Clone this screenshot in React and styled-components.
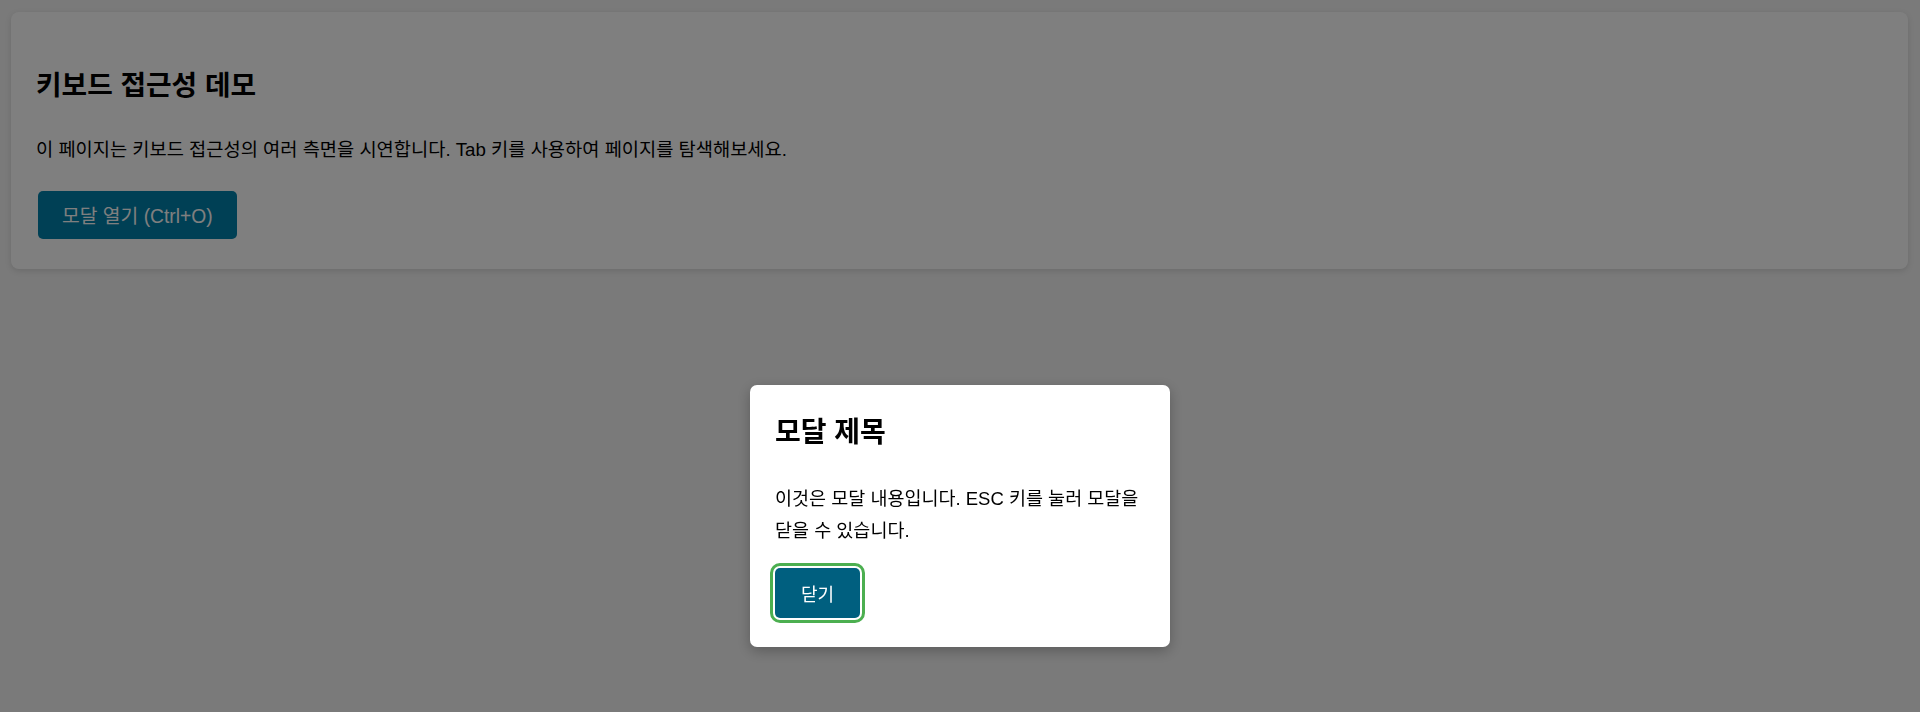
import React from 'react'
import styled, { createGlobalStyle } from 'styled-components'

const GlobalStyle = createGlobalStyle`
  html, body {
    margin: 0;
    padding: 0;
    background: #f4f4f4;
    font-family: "Liberation Sans", "Noto Sans CJK KR", sans-serif;
    color: #000;
    word-break: keep-all;
  }
`

const Page = styled.main`
  padding: 12px 12px 0 11px;
  min-height: 712px;
  box-sizing: border-box;
`

const Card = styled.section`
  background: #fff;
  border-radius: 8px;
  box-shadow: 0 2px 6px rgba(0, 0, 0, 0.12);
  padding: 24px 25px 30px;
`

const Title = styled.h1`
  font-size: 27.8px;
  line-height: 32px;
  font-weight: 700;
  margin: 34px 0 34px;
`

const Text = styled.p`
  font-size: 18.7px;
  line-height: 27px;
  margin: 0 0 28px;
`

const Button = styled.button`
  display: inline-block;
  height: ${p => (p.$small ? '50px' : '48px')};
  padding: 0 ${p => (p.$small ? '26px' : '24px')};
  margin-left: ${p => (p.$small ? '0' : '2px')};
  font-family: inherit;
  font-size: ${p => (p.$small ? '18px' : '19.3px')};
  color: #fff;
  background: ${p => (p.$small ? '#005f7f' : '#0080aa')};
  border: none;
  border-radius: 5px;
  cursor: pointer;
  outline: ${p => (p.$focused ? '3px solid #4caf50' : 'none')};
  outline-offset: 2px;
`

const Overlay = styled.div`
  position: fixed;
  inset: 0;
  background: rgba(0, 0, 0, 0.5);
  display: flex;
  justify-content: center;
  align-items: flex-start;
  padding-top: 385px;
  box-sizing: border-box;
`

const Modal = styled.div`
  width: 420px;
  box-sizing: border-box;
  background: #fff;
  border-radius: 7px;
  box-shadow: 0 4px 14px rgba(0, 0, 0, 0.25);
  padding: 25px 24px 29px 25px;
`

const ModalTitle = styled.h2`
  font-size: 28px;
  line-height: 32px;
  font-weight: 700;
  margin: 7px 0 34px;
`

const ModalText = styled.p`
  font-size: 18.5px;
  line-height: 32px;
  margin: 0 0 21px;
`

export default function App () {
  return (
    <>
      <GlobalStyle />
      <Page>
        <Card>
          <Title>키보드 접근성 데모</Title>
          <Text>이 페이지는 키보드 접근성의 여러 측면을 시연합니다. Tab 키를 사용하여 페이지를 탐색해보세요.</Text>
          <Button>모달 열기 (Ctrl+O)</Button>
        </Card>
      </Page>
      <Overlay role="presentation">
        <Modal role="dialog" aria-modal="true" aria-labelledby="modal-title">
          <ModalTitle id="modal-title">모달 제목</ModalTitle>
          <ModalText>이것은 모달 내용입니다. ESC 키를 눌러 모달을 닫을 수 있습니다.</ModalText>
          <Button $small $focused>닫기</Button>
        </Modal>
      </Overlay>
    </>
  )
}
